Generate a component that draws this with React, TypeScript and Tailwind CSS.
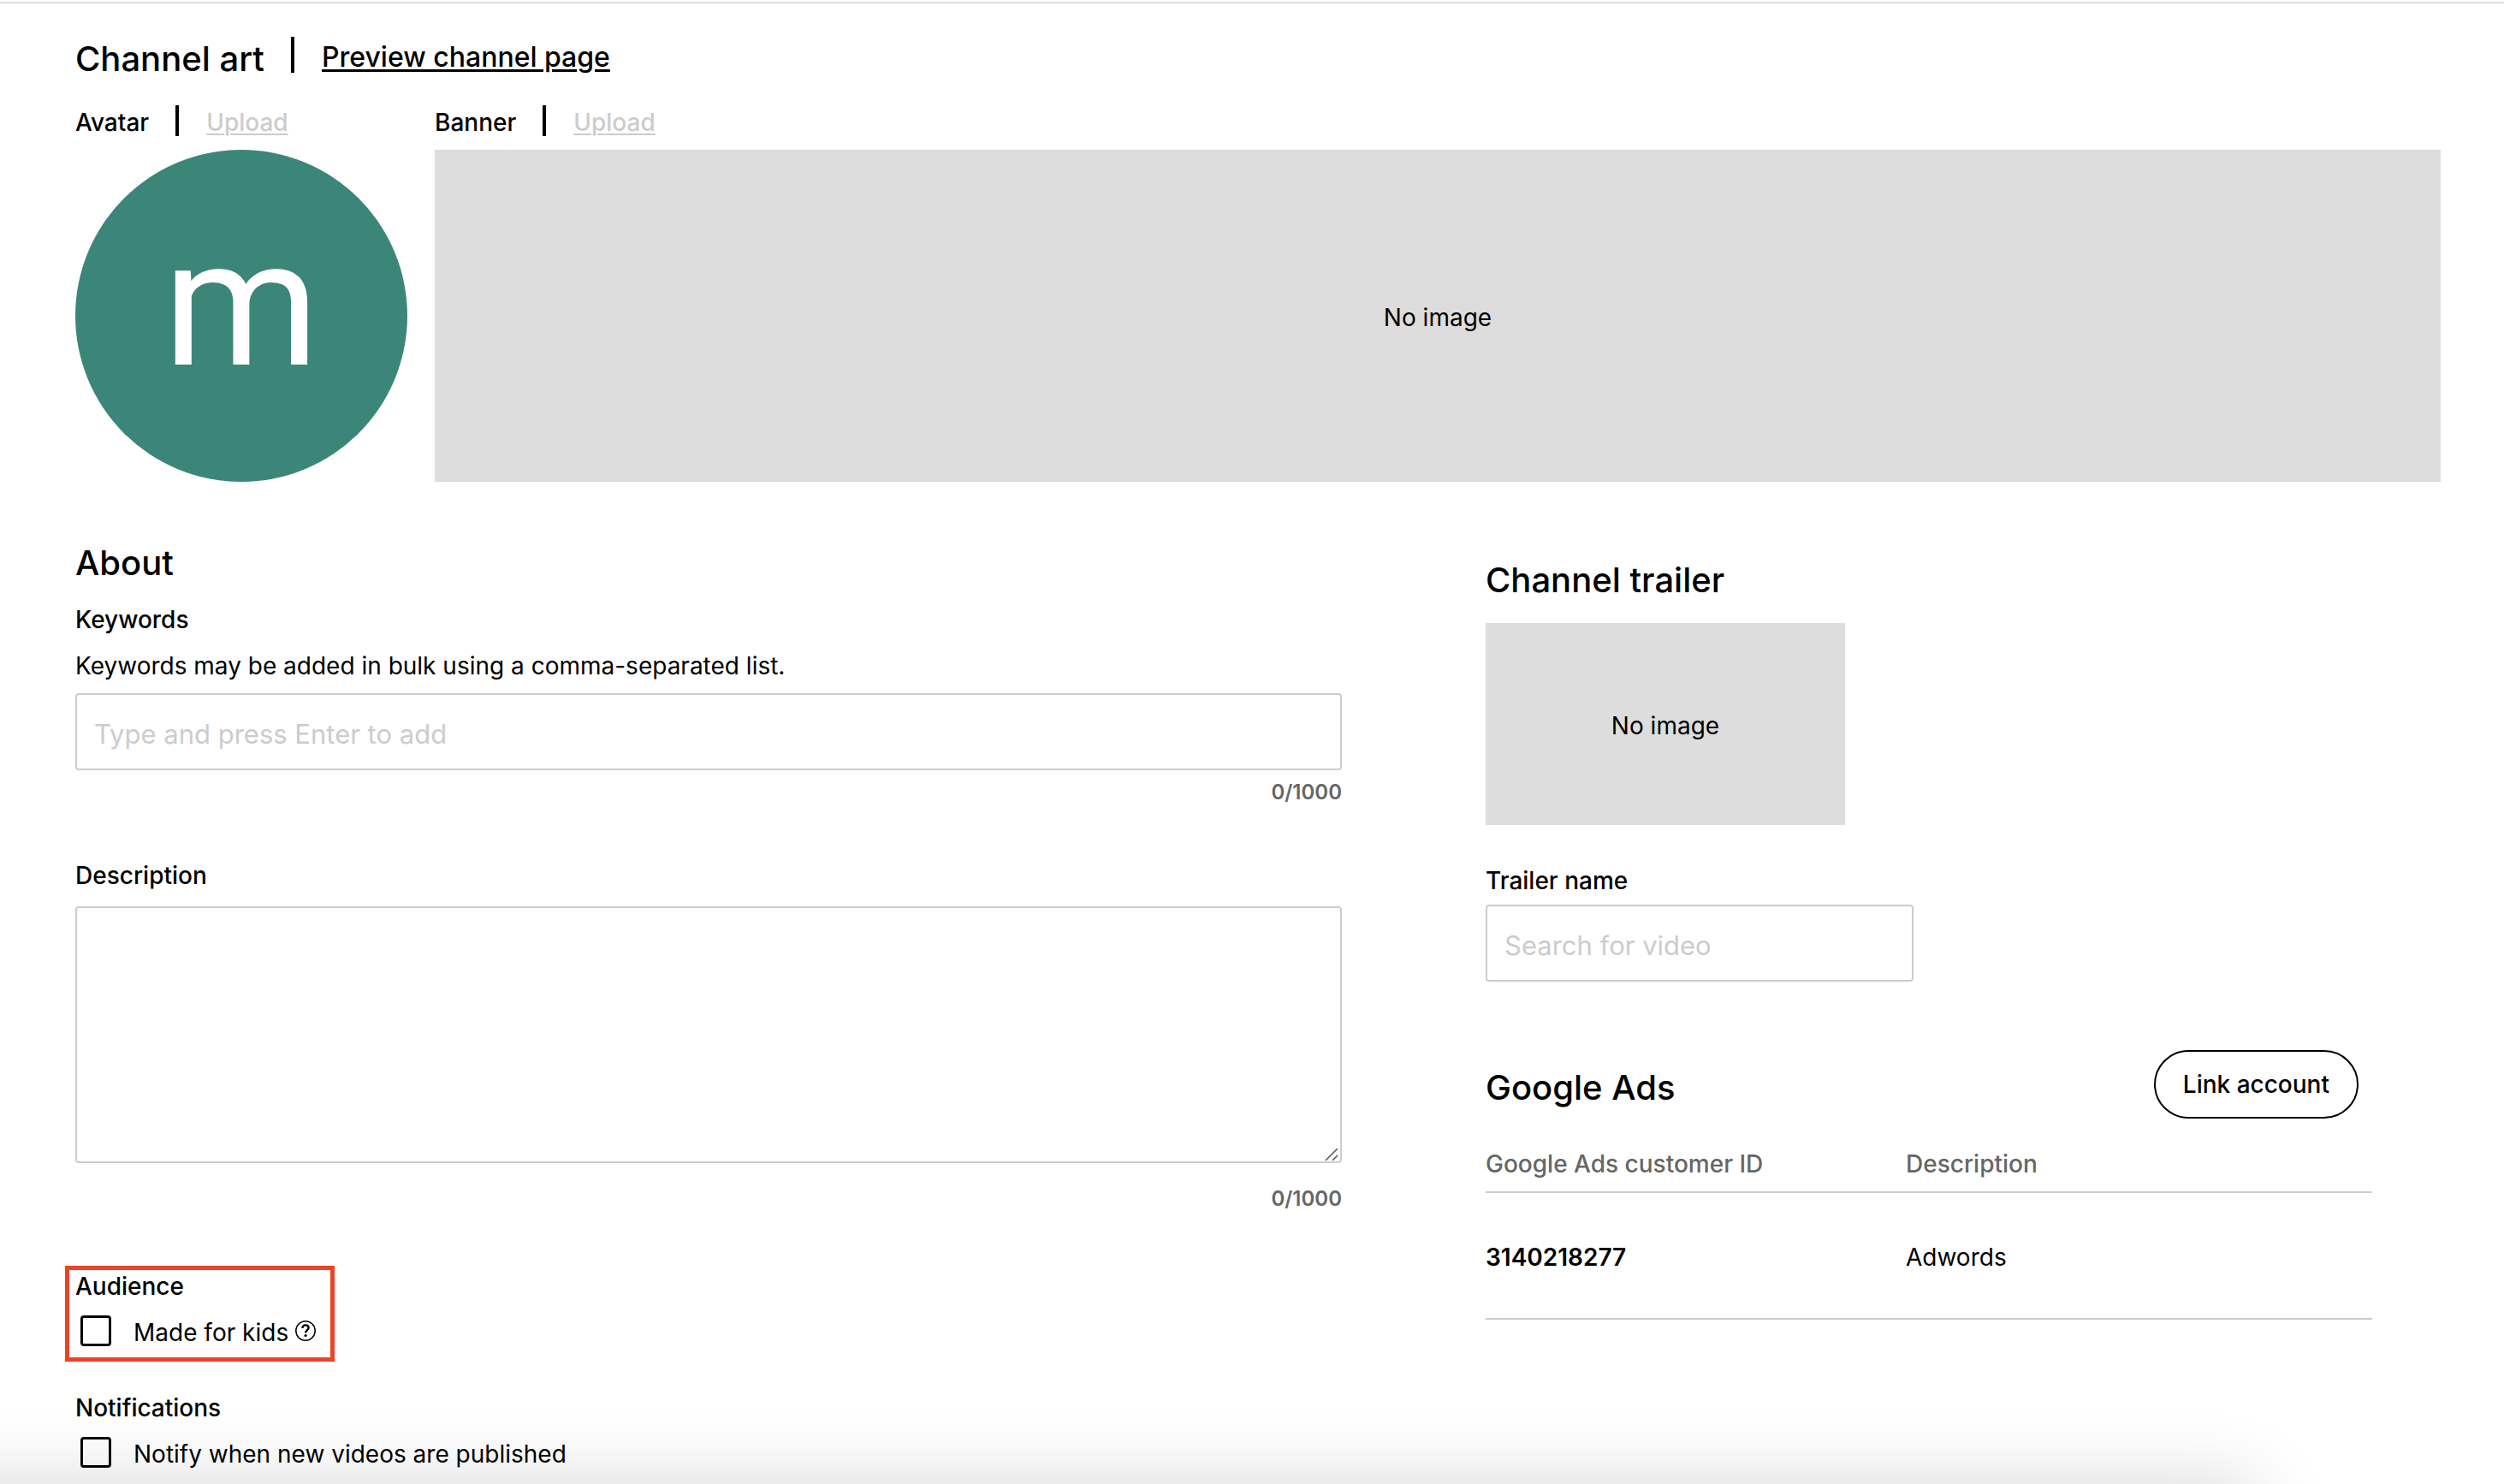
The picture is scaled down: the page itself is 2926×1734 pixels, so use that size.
import { useState } from "react";

type ArtLabelProp = {
    title: string,
};

type CheckFieldProp = {
    id: string,
    label: string,
    checked: boolean,
    setChecked: React.Dispatch<React.SetStateAction<boolean>>,
};

const accounts = [
    { id: "3140218277", description: "Adwords" },
];

const maxLength = 1000;

function ArtLabel({ title }: ArtLabelProp){
    return(
        <div className="flex items-start text-[28px] leading-10">
            <h3 className="font-medium">{title}</h3>
            <span className="ml-[31px] mr-8 h-9 w-1 bg-black"></span>
            <button disabled className="font-medium text-[#cccccc] underline decoration-2 underline-offset-3">Upload</button>
        </div>
    );
};

function CheckField({ id, label, checked, setChecked }: CheckFieldProp){
    return(
        <div className="mt-3.5 flex items-start pl-1.5">
            <input
                id={id}
                type="checkbox"
                checked={checked}
                onChange={(e) => setChecked(e.target.checked)}
                className="size-9 shrink-0 appearance-none rounded-sm border-3 border-black bg-white checked:bg-black"
            />
            <label htmlFor={id} className="ml-[26px] text-[28px] leading-10">{label}</label>
            {id === "kids" && <HelpIcon />}
        </div>
    );
};

function HelpIcon(){
    return(
        <svg viewBox="0 0 24 24" fill="none" stroke="black" className="ml-2 mt-1.5 size-6">
            <circle cx="12" cy="12" r="11.2" strokeWidth="1.5" />
            <path d="M8.3 8.9C8.5 6.7 9.9 5.4 12 5.4c2.1 0 3.6 1.2 3.6 3.1 0 2.6-3.5 2.8-3.5 5.9" strokeWidth="2.4" />
            <circle cx="12.1" cy="17.5" r="1.6" fill="black" stroke="none" />
        </svg>
    );
};

function App(){
    const [keywords, setKeywords] = useState("");
    const [description, setDescription] = useState("");
    const [trailer, setTrailer] = useState("");
    const [kids, setKids] = useState(false);
    const [notify, setNotify] = useState(false);

    return(
        <div className="relative h-screen overflow-hidden bg-white pt-0.5 font-['Inter',sans-serif] text-black">
            <main className="border-t-2 border-[#dddddd] pl-22 pr-[74px] pt-[39px]">
                {/* channel art */}
                <section>
                    <div className="flex items-start">
                        <h2 className="text-[40px] font-medium leading-[52px]">Channel art</h2>
                        <span className="ml-[31px] mr-8 h-[42px] w-1 bg-black"></span>
                        <a href="#" className="text-[32px] font-medium leading-12 underline decoration-3 underline-offset-3">Preview channel page</a>
                    </div>

                    <div className="mt-7 flex gap-8">
                        <div className="shrink-0">
                            <ArtLabel title="Avatar" />
                            <div className="mt-3 flex size-97 items-center justify-center rounded-full bg-[#3c8679] pb-7 font-['Roboto',sans-serif] text-[208px] leading-none text-white">m</div>
                        </div>
                        <div className="grow">
                            <ArtLabel title="Banner" />
                            <div className="mt-3 flex h-97 items-center justify-center bg-[#dddddd] pt-1 text-[28px]">No image</div>
                        </div>
                    </div>
                </section>

                <div className="mt-[69px] grid grid-cols-[1480fr_1036fr] gap-42 pr-20">
                    {/* about */}
                    <section>
                        <h2 className="text-[40px] font-medium leading-[52px]">About</h2>

                        <label htmlFor="keywords" className="mt-5 block text-[28px] font-medium leading-10">Keywords</label>
                        <p className="mt-3.5 text-[28px] leading-10">Keywords may be added in bulk using a comma-separated list.</p>
                        <input
                            id="keywords"
                            type="text"
                            value={keywords}
                            onChange={(e) => setKeywords(e.target.value)}
                            placeholder="Type and press Enter to add"
                            className="mt-3 block h-[90px] w-full rounded-sm border-2 border-[#cccccc] px-5 pt-1 text-[31px] placeholder:text-[#cccccc]"
                        />
                        <p className="mt-2.5 text-right text-2xl font-semibold text-[#666666]">{keywords.length}/{maxLength}</p>

                        <label htmlFor="description" className="mt-[61px] block text-[28px] font-medium leading-10">Description</label>
                        <div className="relative mt-4">
                            <textarea
                                id="description"
                                value={description}
                                onChange={(e) => setDescription(e.target.value)}
                                className="block h-75 w-full resize-none rounded-sm border-2 border-[#cccccc] p-5 text-[31px]"
                            />
                            <svg viewBox="0 0 16 16" stroke="#555555" strokeWidth="1.5" className="absolute bottom-0.5 right-1 size-4">
                                <path d="M1 15L15 1M9 15L15 9" />
                            </svg>
                        </div>
                        <p className="mt-[26px] text-right text-2xl font-semibold text-[#666666]">{description.length}/{maxLength}</p>

                        <div className="relative mt-[66px] w-fit">
                            <h3 className="text-[28px] font-medium leading-10">Audience</h3>
                            <CheckField id="kids" label="Made for kids" checked={kids} setChecked={setKids} />
                            <div className="pointer-events-none absolute -bottom-3.5 -left-3 -right-5.5 -top-1 border-5 border-[#ec4327]"></div>
                        </div>

                        <div className="mt-12">
                            <h3 className="text-[28px] font-medium leading-10">Notifications</h3>
                            <CheckField id="notify" label="Notify when new videos are published" checked={notify} setChecked={setNotify} />
                        </div>
                    </section>

                    <div className="pt-5">
                        {/* trailer */}
                        <section>
                            <h2 className="text-[40px] font-medium leading-[52px]">Channel trailer</h2>
                            <div className="mt-6 flex h-59 w-105 items-center justify-center bg-[#dddddd] pt-1 text-[28px]">No image</div>

                            <label htmlFor="trailer" className="mt-[45px] block text-[28px] font-medium leading-10">Trailer name</label>
                            <input
                                id="trailer"
                                type="text"
                                value={trailer}
                                onChange={(e) => setTrailer(e.target.value)}
                                placeholder="Search for video"
                                className="mt-2 block h-[90px] w-125 rounded-sm border-2 border-[#cccccc] px-5 pt-1 text-[31px] placeholder:text-[#cccccc]"
                            />
                        </section>

                        {/* ads */}
                        <section className="mt-20">
                            <div className="flex items-center justify-between pr-4">
                                <h2 className="pt-2 text-[40px] font-medium leading-[52px]">Google Ads</h2>
                                <button className="h-20 rounded-full border-2 border-black px-8 text-[28px] font-medium">Link account</button>
                            </div>

                            <table className="mt-[33px] w-full table-fixed text-left text-[28px] leading-10">
                                <thead>
                                    <tr className="border-b-2 border-[#cccccc] text-[#666666]">
                                        <th className="w-[491px] pb-3 font-medium">Google Ads customer ID</th>
                                        <th className="pb-3 font-medium">Description</th>
                                    </tr>
                                </thead>
                                <tbody>
                                    {accounts.map((account) => {
                                        return <tr key={account.id} className="border-b-2 border-[#cccccc]">
                                            <td className="pb-[51px] pt-[55px] font-semibold">{account.id}</td>
                                            <td className="pb-[51px] pt-[55px]">{account.description}</td>
                                        </tr>
                                    })}
                                </tbody>
                            </table>
                        </section>
                    </div>
                </div>
            </main>

            {/* shadow cast by the bar below the form */}
            <div className="pointer-events-none absolute -left-25 right-[291px] top-full h-50 shadow-[0_0_90px_rgba(0,0,0,0.16)]"></div>
        </div>
    );
};

export default App;
